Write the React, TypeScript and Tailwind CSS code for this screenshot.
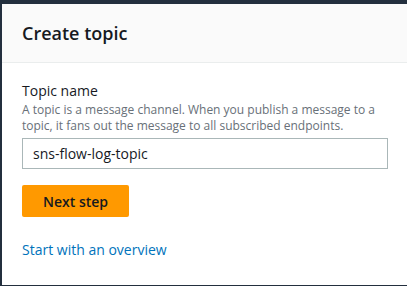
import React from "react";

export default function App() {
  return (
    <div
      className="w-[407px] h-[286px] bg-[#232f3e] pt-[4px] pl-[2px] pb-[1px] flex"
      style={{ fontFamily: '"Open Sans", "Noto Sans", Arial, sans-serif' }}
    >
      <div className="flex-1 bg-white flex flex-col">
        <div className="h-[59px] bg-[#fafafa] border-b border-[#eaeded] px-[20px] flex items-center">
          <h1 className="text-[18px] font-semibold text-[#16191f] leading-none">Create topic</h1>
        </div>
        <div className="px-[20px] pt-[18px]">
          <div className="text-[14px] text-[#16191f] leading-[20px]">Topic name</div>
          <div className="text-[12px] text-[#687078] leading-[16px] mt-[1px]">
            A topic is a message channel. When you publish a message to a topic, it fans out the message to all subscribed endpoints.
          </div>
          <div className="mt-[4px] w-[366px] h-[31px] border border-[#aab7b8] flex items-center px-[10px] text-[14px] text-[#16191f]">
            sns-flow-log-topic
          </div>
          <button className="mt-[16px] w-[107px] h-[32px] bg-[#ff9900] rounded-[2px] text-[14px] font-semibold text-[#16191f] flex items-center justify-center">
            Next step
          </button>
          <div className="mt-[23px] text-[14px] text-[#0073bb] leading-[20px]">Start with an overview</div>
        </div>
      </div>
    </div>
  );
}
